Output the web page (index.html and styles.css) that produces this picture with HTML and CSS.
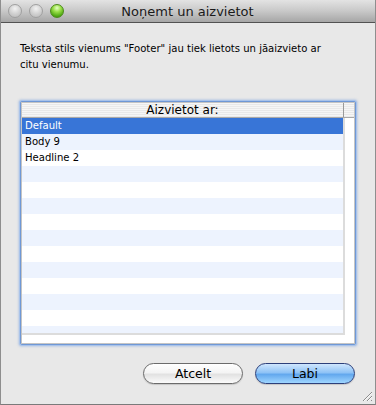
FILE: index.html
```html
<!DOCTYPE html>
<html lang="lv">
<head>
  <meta charset="UTF-8" />
  <title>Noņemt un aizvietot</title>
  <link rel="stylesheet" href="styles.css">
</head>
<body>

  <div class="window">
    <div class="titlebar">
      <div class="lights">
        <span class="light"></span>
        <span class="light"></span>
        <span class="light green"></span>
      </div>
      <div class="title">Noņemt un aizvietot</div>
    </div>

    <div class="content">
      <p class="message">Teksta stils vienums "Footer" jau tiek lietots un jāaizvieto ar<br>citu vienumu.</p>

      <div class="list-frame">
        <div class="list">
          <div class="list-header">
            <span class="col-title">Aizvietot ar:</span>
            <span class="col-corner"></span>
          </div>
          <div class="list-body">
            <div class="rows">
              <div class="row selected">Default</div>
              <div class="row">Body 9</div>
              <div class="row">Headline 2</div>
            </div>
            <div class="vscroll"></div>
          </div>
          <div class="hscroll"></div>
        </div>
      </div>

      <div class="buttons">
        <button class="btn">Atcelt</button>
        <button class="btn default">Labi</button>
      </div>
    </div>

    <svg class="grip" width="11" height="11" viewBox="0 0 11 11">
      <path d="M1 10 L10 1 M5 10 L10 5 M9 10 L10 9" stroke="#8c8c8c" stroke-width="1" />
      <path d="M2 10 L10 2 M6 10 L10 6" stroke="#fafafa" stroke-width="1" />
    </svg>
  </div>

</body>
</html>
```

FILE: styles.css
```css
body {
  margin: 0;
  background: #e8e8e8;
  font-family: "DejaVu Sans", sans-serif;
  font-size: 12px;
  color: #000;
}
.window {
  position: relative;
  width: 376px;
  height: 405px;
  box-sizing: border-box;
  background: #e8e8e8;
  border-left: 1px solid #8e8e8e;
  border-right: 1px solid #8e8e8e;
  border-bottom: 1px solid #7a7a7a;
}
.titlebar {
  height: 22px;
  display: flex;
  align-items: center;
  background: linear-gradient(#e3e3e3, #c8c8c8 50%, #a6a6a6);
  border-bottom: 1px solid #525252;
}
.lights {
  display: flex;
  gap: 7px;
  padding-left: 7px;
}
.light {
  width: 14px;
  height: 14px;
  border-radius: 50%;
  box-sizing: border-box;
  border: 1px solid #a0a0a0;
  background: radial-gradient(circle at 50% 30%, #f2f2f2, #cfcfcf 55%, #b8b8b8);
}
.light.green {
  border-color: #4d8a1c;
  background: radial-gradient(circle at 50% 25%, #e6ffc8 0, #9be04a 35%, #4fa812 75%, #3b8a0a);
}
.title {
  flex: 1;
  text-align: center;
  margin-right: 64px;
  font-size: 13px;
  color: #1a1a1a;
}
.content {
  padding: 18px 19px 0 19px;
}
.message {
  margin: 0;
  font-family: "DejaVu Sans Condensed", "DejaVu Sans", sans-serif;
  font-stretch: condensed;
  font-size: 11.2px;
  line-height: 16px;
}
.list-frame {
  margin-top: 28px;
  height: 244px;
  box-sizing: border-box;
  border: 1px solid #6f98d6;
  border-radius: 2px;
  box-shadow: 0 0 0 1px #a9c3ea, 0 0 2px 2px rgba(120, 160, 220, 0.35);
  background: #fff;
}
.list {
  height: 100%;
  display: flex;
  flex-direction: column;
  border: 1px solid #c4c4c4;
  box-sizing: border-box;
  background: #fff;
}
.list-header {
  height: 15px;
  box-sizing: border-box;
  display: flex;
  border-bottom: 1px solid #a8a8a8;
  background: repeating-linear-gradient(#f6f6f6 0 1px, #e9e9e9 1px 2px);
}
.col-title {
  flex: 1;
  text-align: center;
  line-height: 14px;
}
.col-corner {
  width: 10px;
  border-left: 1px solid #9a9a9a;
}
.list-body {
  flex: 1;
  display: flex;
  overflow: hidden;
}
.rows {
  flex: 1;
  background: repeating-linear-gradient(#fff 0 16px, #edf3fe 16px 32px);
  border-bottom: 2px solid #dcdcdc;
}
.row {
  height: 16px;
  line-height: 16px;
  padding-left: 3px;
  font-family: "DejaVu Sans Condensed", "DejaVu Sans", sans-serif;
  font-stretch: condensed;
  font-size: 11.2px;
}
.row.selected {
  background: #3875d7;
  color: #fff;
}
.vscroll {
  width: 9px;
  border-left: 2px solid #dcdcdc;
  background: #fff;
}
.hscroll {
  height: 8px;
  background: #fff;
}
.buttons {
  display: flex;
  justify-content: flex-end;
  gap: 12px;
  margin-top: 18px;
  margin-right: 1px;
}
.btn {
  width: 100px;
  height: 21px;
  padding: 0;
  border-radius: 11px;
  border: 1px solid #6b6b6b;
  font-family: "DejaVu Sans", sans-serif;
  font-size: 12.5px;
  color: #000;
  background: linear-gradient(#ffffff, #f4f4f4 45%, #e2e2e2 55%, #fbfbfb);
  box-shadow: 0 1px 1px rgba(0, 0, 0, 0.15);
}
.btn.default {
  border-color: #2c3f7a;
  background: linear-gradient(#cfe6fd, #8fc3f6 45%, #63a8ee 55%, #9fd6ff);
}
.grip {
  position: absolute;
  right: 2px;
  bottom: 2px;
}
```
